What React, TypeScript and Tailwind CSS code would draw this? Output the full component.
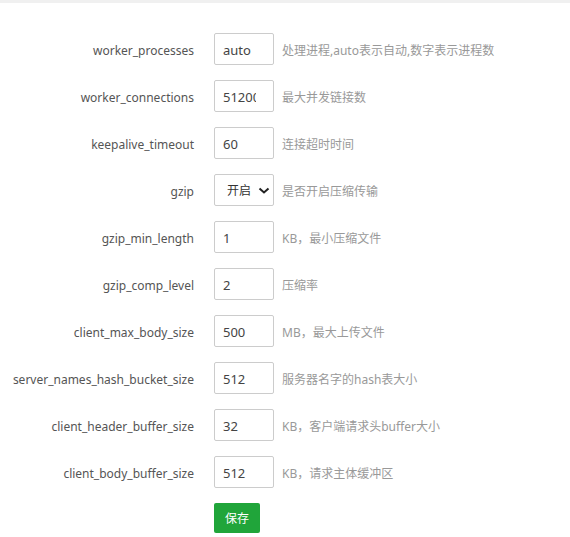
import React from "react";

const rows: { label: string; value: string; hint: string; select?: boolean }[] = [
  { label: "worker_processes", value: "auto", hint: "处理进程,auto表示自动,数字表示进程数" },
  { label: "worker_connections", value: "51200", hint: "最大并发链接数" },
  { label: "keepalive_timeout", value: "60", hint: "连接超时时间" },
  { label: "gzip", value: "开启", hint: "是否开启压缩传输", select: true },
  { label: "gzip_min_length", value: "1", hint: "KB，最小压缩文件" },
  { label: "gzip_comp_level", value: "2", hint: "压缩率" },
  { label: "client_max_body_size", value: "500", hint: "MB，最大上传文件" },
  { label: "server_names_hash_bucket_size", value: "512", hint: "服务器名字的hash表大小" },
  { label: "client_header_buffer_size", value: "32", hint: "KB，客户端请求头buffer大小" },
  { label: "client_body_buffer_size", value: "512", hint: "KB，请求主体缓冲区" },
];

export default function App() {
  return (
    <div
      className="w-[570px] h-[537px] bg-white text-[12px]"
      style={{ fontFamily: '"Noto Sans", "Noto Sans CJK SC", sans-serif' }}
    >
      <div className="h-[3px] bg-[#f0f0f0]" />
      <div className="flex flex-col gap-[15px] pt-[30px]">
        {rows.map((r) => (
          <div key={r.label} className="flex items-center h-[32px]">
            <div className="w-[194px] pt-[4px] text-right text-[#555] whitespace-nowrap">{r.label}</div>
            <div className="ml-[20px] w-[60px] h-[32px] relative">
              {r.select ? (
                <div className="w-full h-full border border-[#ccc] rounded-[2px] flex items-center pl-[12px] pt-[2px] text-[#333]">
                  <span>{r.value}</span>
                  <svg className="absolute right-[4px] top-[13px]" width="12" height="8" viewBox="0 0 12 8">
                    <path d="M1.5 1.5 L6 5.5 L10.5 1.5" fill="none" stroke="#222" strokeWidth="2" />
                  </svg>
                </div>
              ) : (
                <input
                  readOnly
                  value={r.value}
                  className="w-full h-full border border-[#ccc] rounded-[2px] pl-[8px] pr-[17px] pt-[2px] text-[13px] text-[#444] outline-none"
                />
              )}
            </div>
            <div className="ml-[8px] pt-[3px] text-[#999] whitespace-nowrap">{r.hint}</div>
          </div>
        ))}
        <div className="flex h-[30px]">
          <button className="ml-[214px] w-[46px] h-[30px] pt-[1px] bg-[#20a53a] text-white rounded-[2px] text-[12px]">
            保存
          </button>
        </div>
      </div>
    </div>
  );
}
